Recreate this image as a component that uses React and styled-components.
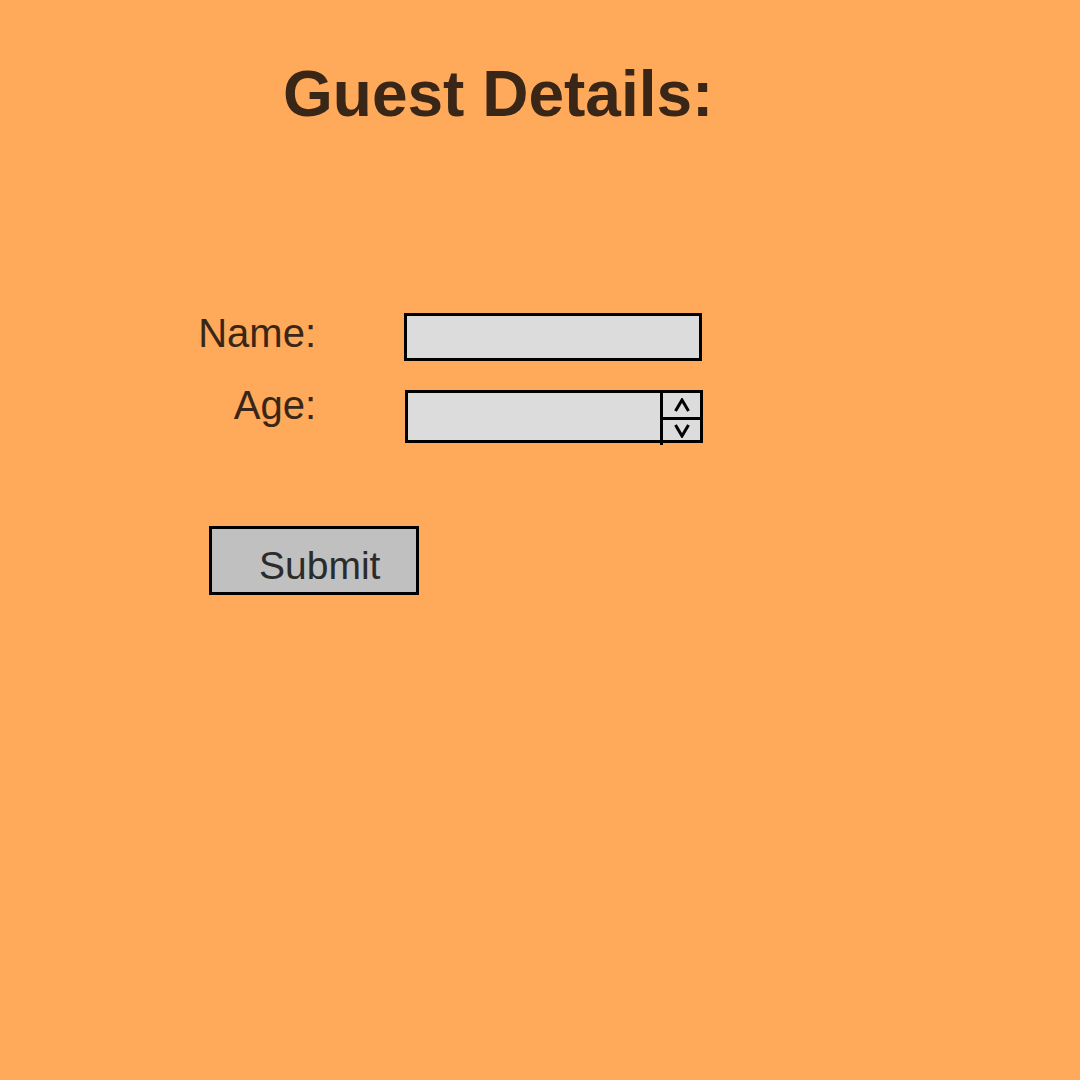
import React from "react";
import styled, { createGlobalStyle } from "styled-components";

const GlobalStyle = createGlobalStyle`
  html, body {
    margin: 0;
    padding: 0;
    background: #ffa95a;
  }
  body {
    font-family: "Liberation Sans", Arial, sans-serif;
  }
`;

const Page = styled.div`
  width: 1080px;
  height: 1080px;
  background: #ffa95a;
  box-sizing: border-box;
  padding-top: 57px;
`;

const Title = styled.h1`
  margin: 0 0 0 283px;
  font-size: 64px;
  font-weight: 700;
  color: #3a2616;
`;

const Form = styled.form`
  display: flex;
  flex-direction: column;
  margin-top: 179px;
`;

const Row = styled.div`
  display: flex;
  align-items: flex-start;
  gap: 88px;
  margin-top: ${(p) => p.$top || 0}px;
`;

const Label = styled.label`
  width: 126px;
  margin-left: 190px;
  text-align: right;
  font-size: 40px;
  line-height: 46px;
  color: #3a2616;
`;

const TextInput = styled.input`
  box-sizing: border-box;
  width: 298px;
  height: 48px;
  margin-top: ${(p) => p.$offset}px;
  border: 3px solid #000;
  background: #dcdcdc;
  outline: none;
  padding: 0 6px;
  font: 24px "Liberation Sans", Arial, sans-serif;
`;

const NumberBox = styled.div`
  box-sizing: border-box;
  display: flex;
  width: 298px;
  height: 53px;
  margin-top: ${(p) => p.$offset}px;
  margin-left: 1px;
  border: 3px solid #000;
  background: #dcdcdc;
`;

const NumberField = styled.input`
  flex: 1;
  min-width: 0;
  border: none;
  background: transparent;
  outline: none;
  padding: 0 6px;
  font: 24px "Liberation Sans", Arial, sans-serif;
`;

const Spinner = styled.div`
  position: relative;
  width: 37px;
  display: flex;
  flex-direction: column;
  border-left: 3px solid #000;

  &::after {
    content: "";
    position: absolute;
    left: -3px;
    bottom: -5px;
    width: 3px;
    height: 3px;
    background: #000;
  }
`;

const SpinButton = styled.div`
  flex: ${(p) => (p.$lower ? "1" : "0 0 24px")};
  display: flex;
  align-items: center;
  justify-content: center;
  border-top: ${(p) => (p.$lower ? "3px solid #000" : "none")};
`;

const Submit = styled.button`
  box-sizing: border-box;
  width: 210px;
  height: 69px;
  margin: 83px 0 0 209px;
  padding: 10px 0 0 47px;
  border: 3px solid #000;
  background: #c0c0c0;
  color: #2b2b2b;
  font: 39px "Liberation Sans", Arial, sans-serif;
  text-align: left;
  cursor: pointer;
`;

const Chevron = ({ up }) => (
  <svg width="18" height="15" viewBox="0 0 18 15">
    <polyline
      points={up ? "2.5,13 9,2 15.5,13" : "2.5,2 9,13 15.5,2"}
      fill="none"
      stroke="#000"
      strokeWidth="3"
    />
  </svg>
);

export default function App() {
  return (
    <>
      <GlobalStyle />
      <Page>
        <Title>Guest Details:</Title>
        <Form onSubmit={(e) => e.preventDefault()}>
          <Row>
            <Label htmlFor="name">Name:</Label>
            <TextInput id="name" type="text" $offset={3} />
          </Row>
          <Row $top={21}>
            <Label htmlFor="age">Age:</Label>
            <NumberBox $offset={8}>
              <NumberField id="age" type="text" inputMode="numeric" />
              <Spinner>
                <SpinButton>
                  <Chevron up />
                </SpinButton>
                <SpinButton $lower>
                  <Chevron />
                </SpinButton>
              </Spinner>
            </NumberBox>
          </Row>
          <div>
            <Submit type="submit">Submit</Submit>
          </div>
        </Form>
      </Page>
    </>
  );
}
